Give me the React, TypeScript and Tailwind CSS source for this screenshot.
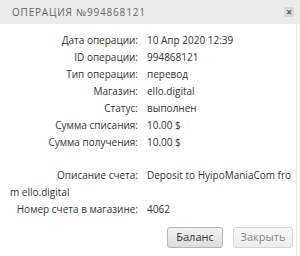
const rows: [string, string][] = [
  ["Дата операции:", "10 Апр 2020 12:39"],
  ["ID операции:", "994868121"],
  ["Тип операции:", "перевод"],
  ["Магазин:", "ello.digital"],
  ["Статус:", "выполнен"],
  ["Сумма списания:", "10.00 $"],
  ["Сумма получения:", "10.00 $"],
];

function Row({ label, value }: { label: string; value: string }) {
  return (
    <div className="flex h-[17px] items-center">
      <span className="w-[128px] shrink-0 text-right">{label}</span>
      <span className="pl-[9px]">{value}</span>
    </div>
  );
}

export default function App() {
  return (
    <div className="w-[300px] h-[256px] bg-white overflow-hidden font-['Open_Sans',sans-serif] text-[10px] text-[#333]">
      {/* header */}
      <div className="h-[24px] bg-[#ececec] flex items-center justify-between pl-[12px] pr-[6px]">
        <span className="text-[10px] tracking-[0.8px] text-[#666]">ОПЕРАЦИЯ №994868121</span>
        <button className="w-[10px] h-[10px] bg-[#d9d9d9] flex items-center justify-center text-[#555] text-[10px] leading-none font-bold">
          ×
        </button>
      </div>

      <div className="border-r border-[#e2e2e2] w-[297px] h-[232px] pt-[8px] pl-[10px]">
        {rows.map(([l, v]) => (
          <Row key={l} label={l} value={v} />
        ))}

        <div className="h-[16px]" />

        <p className="w-[282px] leading-[17px]">
          <span className="inline-block w-[128px] text-right">Описание счета:</span>
          <span className="pl-[9px]">
            Deposit to HyipoManiaCom fro
            <br />m ello.digital
          </span>
        </p>
        <Row label="Номер счета в магазине:" value="4062" />

        <div className="flex justify-end gap-[10px] pr-[3px] mt-[9px]">
          <button className="h-[21px] w-[56px] rounded-[3px] border border-[#b5b5b5] bg-gradient-to-b from-[#f2f2f2] to-[#dcdcdc] text-[11px] text-[#333]">
            Баланс
          </button>
          <button className="h-[21px] w-[60px] rounded-[3px] border border-[#d5d5d5] bg-gradient-to-b from-[#f8f8f8] to-[#ececec] text-[11px] text-[#888]">
            Закрыть
          </button>
        </div>
      </div>
    </div>
  );
}
